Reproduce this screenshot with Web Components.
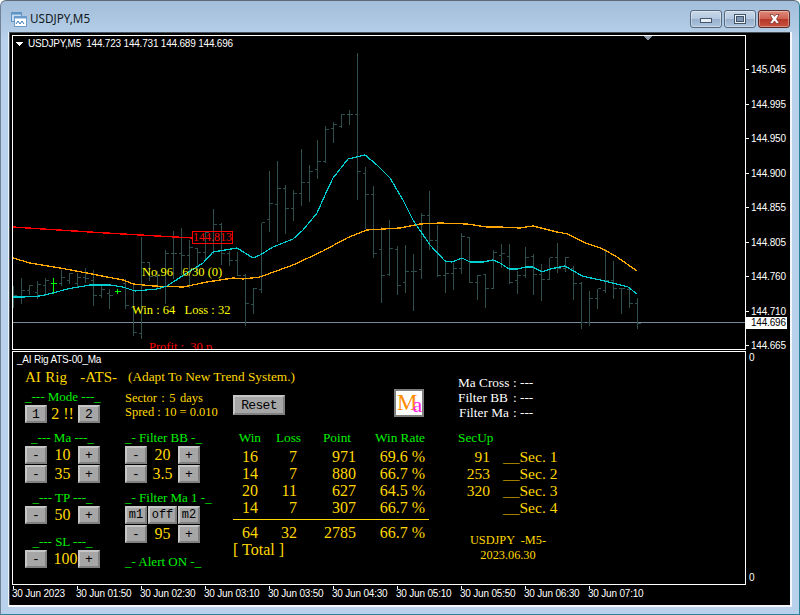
<!doctype html>
<html>
<head>
<meta charset="utf-8">
<title>USDJPY,M5</title>
<style>
html, body { margin: 0; background: #fff; }
</style>
</head>
<body>
<x-window>
  <x-titlebar slot="title">USDJPY,M5</x-titlebar>
  <x-chart></x-chart>
  <x-price-axis></x-price-axis>
  <x-panel>
    <x-title-row slot="head"></x-title-row>
    <div slot="c1">
      <x-field label="_--- Mode ---_"><x-stepper a="1" b="2">2 !!</x-stepper></x-field>
      <x-field label="_--- Ma ---_" style="margin-top:7px"><x-stepper>10</x-stepper><x-stepper>35</x-stepper></x-field>
      <x-field label="_--- TP ---_" style="margin-top:7px"><x-stepper>50</x-stepper></x-field>
      <x-field label="_--- SL ---_" style="margin-top:10px"><x-stepper style="--nudge:6px">100</x-stepper></x-field>
    </div>
    <div slot="c2">
      <x-sector></x-sector>
      <x-field label="_- Filter BB -_" style="margin-top:2px"><x-stepper>20</x-stepper><x-stepper>3.5</x-stepper></x-field>
      <x-field label="_- Filter Ma 1 -_" style="margin-top:7px"><x-ma-switch></x-ma-switch><x-stepper>95</x-stepper></x-field>
      <x-field label="_- Alert ON -_" style="margin-top:11px"></x-field>
    </div>
    <x-results slot="c3"></x-results>
    <x-status slot="c4"></x-status>
  </x-panel>
  <x-sub-axis></x-sub-axis>
  <x-time-axis></x-time-axis>
</x-window>

<script>
/* globals customElements HTMLElement */
const define = (name, style, html, extra) => {
  const template = document.createElement('template')
  template.innerHTML = `<style>${style}</style>${html}`
  customElements.define(name, class extends HTMLElement {
    constructor () {
      super()
      this.attachShadow({mode: 'open'})
      this.shadowRoot.appendChild(template.content.cloneNode(true))
    }
    connectedCallback () {
      if (extra) extra.call(this, this.shadowRoot)
    }
  })
}

const serif = '"Liberation Serif", "Times New Roman", serif'
const sans = '"Liberation Sans", Arial, sans-serif'
const mono = '"Liberation Mono", "Courier New", monospace'

// Window frame. Chart, axis, panel and time strip sit on a small grid inside the client area.
define('x-window', `
  :host {
    display: flex; flex-direction: column; box-sizing: border-box;
    width: 800px; height: 615px; overflow: hidden;
    border: 1px solid #2a8296; border-top-color: #5e6a75; border-left-color: #6f8296;
    border-radius: 6px 6px 0 0;
    background: linear-gradient(#a3bedb, #b9d1ea 40px);
  }
  #client {
    flex: 1; margin: 0 7px 7px 7px;
    border-left: 1px solid #eef3f9; border-right: 2px solid #f4f7fb; border-bottom: 2px solid #f4f7fb;
    background: #000; box-shadow: inset 1px 1px 0 #454f59;
    display: grid; box-sizing: border-box;
    padding: 3px 0 0 3px;
    grid-template-columns: 734px 1fr;
    grid-template-rows: 315px 234px 1fr;
    row-gap: 1px;
  }
  ::slotted(x-time-axis) { grid-column: 1 / 3; }
`, `<slot name="title"></slot><div id="client"><slot></slot></div>`)

define('x-titlebar', `
  :host {
    display: flex; align-items: flex-start; height: 31px; box-sizing: border-box;
    padding: 9px 9px 0 10px;
    font: 11.700px "Noto Sans", "Open Sans", sans-serif; color: #101820;
  }
  svg { margin: 2px 3px 0 0; flex: none; }
  #t { flex: 1; }
  .b {
    width: 32px; height: 18px; box-sizing: border-box; margin-left: 2px;
    border: 1px solid #56697f; border-radius: 3px;
    background: linear-gradient(#cad9ea 0, #b4c8df 48%, #98b0cc 52%, #aec5de 100%);
    box-shadow: inset 0 0 0 1px rgba(255,255,255,.35);
    display: flex; align-items: center; justify-content: center;
  }
  .c {
    border-color: #5c2a25;
    background: linear-gradient(#de8a7c 0, #cf6252 48%, #b5392a 52%, #c9503e 100%);
  }
  .min { width: 12px; height: 5px; margin-top: 3px; box-sizing: border-box; background: #e8eef5; border: 1px solid #46566a; }
  .max { width: 12px; height: 10px; box-sizing: border-box; background: #7d95b0; border: 1px solid #46566a; box-shadow: inset 0 0 0 1px #eef3f8, inset 0 0 0 2px #46566a; }
`, `
  <svg width="16" height="15" viewBox="0 0 16 15">
    <rect x="0.5" y="0.5" width="10" height="9" fill="#c4dcf2" stroke="#5f93c4"/>
    <rect x="0.5" y="0.5" width="10" height="2" fill="#5f93c4"/>
    <rect x="3.5" y="4.5" width="12" height="10" fill="#fff" stroke="#6c9ccb"/>
    <rect x="3.5" y="4.5" width="12" height="2" fill="#6c9ccb"/>
    <path d="M5 12l2-3 2 3 2-3 2 3" fill="none" stroke="#3d79b4"/>
  </svg>
  <div id="t"><slot></slot></div>
  <div class="b"><div class="min"></div></div>
  <div class="b"><div class="max"></div></div>
  <div class="b c">
    <svg style="margin:0" width="13" height="10" viewBox="0 0 13 10"><path d="M2 .5h3l1.500 2 1.500-2h3L8.500 5l3 4.500h-3L6.500 7l-2 2.500h-3L4.500 5z" fill="#fff" stroke="#7b2c22" stroke-width=".7"/></svg>
  </div>
`)

// OHLC bars read off the reference: high, low, open, close as 3x crop rows, one list per crop
const crop = (list, top) => list.map(b => b.map(v => top + v / 3))
const bars = [
  ...crop([
    [255, 320, 295, 285], [232, 308, 292, 270], [253, 283, 270, 255], [240, 295, 275, 252],
    [232, 285, 255, 240], [232, 280, 250, 250], [207, 255, 250, 230], [217, 250, 240, 220],
    [215, 262, 248, 230], [202, 245, 230, 235], [208, 315, 240, 285], [255, 290, 285, 268],
    [263, 325, 278, 285], [265, 279, 272, 272], [235, 325, 250, 315], [252, 405, 320, 395],
    [108, 415, 400, 185], [185, 240, 185, 228], [210, 262, 228, 258], [148, 308, 258, 160],
    [90, 235, 160, 160], [82, 222, 160, 165], [118, 260, 165, 140], [145, 215, 145, 155],
    [90, 180, 155, 95], [25, 160, 155, 72], [65, 192, 72, 158], [150, 195, 160, 180],
    [152, 225, 180, 225], [218, 375, 225, 310], [262, 340, 312, 265]
  ], 200),
  ...crop([
    [545, 755, 748, 547], [390, 572, 538, 490], [360, 602, 493, 445], [432, 578, 445, 505],
    [447, 540, 505, 460], [323, 495, 458, 427], [372, 482, 427, 394], [297, 413, 388, 364],
    [255, 365, 364, 268], [243, 305, 265, 253], [220, 260, 258, 223], [207, 252, 223, 222],
    [37, 476, 223, 394], [378, 565, 400, 463], [435, 650, 463, 640], [558, 785, 628, 706],
    [537, 705, 703, 625], [615, 762, 628, 735], [612, 755, 727, 693], [640, 810, 692, 692],
    [516, 713, 688, 525], [450, 628, 525, 601], [552, 708, 601, 704], [663, 755, 706, 700],
    [665, 747, 700, 685], [576, 698, 685, 588], [590, 727, 592, 727], [702, 776, 727, 706],
    [702, 800, 703, 745], [628, 745, 745, 637]
  ], 40),
  ...crop([
    [128, 200, 165, 158], [128, 250, 168, 245], [210, 278, 240, 225], [138, 230, 225, 170],
    [160, 282, 168, 222], [190, 300, 222, 238], [170, 238, 238, 172], [126, 215, 172, 205],
    [168, 212, 205, 170], [195, 296, 205, 248], [243, 383, 248, 365], [270, 375, 365, 295],
    [265, 323, 293, 265], [145, 275, 270, 240], [180, 293, 240, 265], [262, 338, 265, 265],
    [268, 320, 268, 310], [290, 383, 310, 368]
  ], 200)
]

const cyan = '13,297 23,297 40,296 53,293 67,289 90,285 110,285 123,287 135,291 157,289 167,286 187,273 203,263 213,252 237,248 253,258 260,255 273,247 293,239 303,230 317,213 325,195 333,178 348,159 365,155 377,165 390,178 403,200 413,220 430,245 445,261 452,262 462,258 470,262 483,262 493,260 500,263 509,269 518,269 525,267 533,267 542,272 550,269 565,266 582,276 600,280 620,285 628,287 637,294'
const orange = '13,258 30,263 60,268 87,273 107,277 123,280 133,284 153,286 183,287 207,282 233,278 243,279 260,277 293,265 323,251 347,238 367,230 400,228 420,224 440,223 467,224 487,227 500,227 520,228 533,226 557,232 568,234 583,242 603,249 617,257 637,271'
const red = '13,227 43,229 90,232 140,235 193,238'
const shift = pts => pts.split(' ').map(p => { const [x, y] = p.split(','); return `${x - 12},${y - 35}` }).join(' ')

define('x-chart', `
  :host {
    display: block; position: relative; overflow: hidden; box-sizing: border-box;
    border: 1px solid #fff; border-right-width: 1px; width: 734px; height: 315px;
    font: 10px ${sans}; color: #fff;
  }
  svg { position: absolute; left: -1px; top: -1px; }
  span { position: absolute; white-space: pre; }
  #sym { left: 15px; top: 2px; letter-spacing: -.2px; }
  #no, #wl { font: 12.500px ${serif}; color: #ff0; }
  #no { left: 129px; top: 229px; }
  #wl { left: 119px; top: 267px; }
  #pf { font: 12.500px ${serif}; color: #f00; left: 136px; top: 304px; }
  #tag {
    left: 179px; top: 195px; width: 41px; height: 13px; box-sizing: border-box;
    border: 1px solid #f00; font: 12px/11px ${serif}; color: #f00; text-align: center;
  }
`, `
  <svg id="s" width="734" height="315" shape-rendering="crispEdges"></svg>
  <span id="sym">USDJPY,M5  144.723 144.731 144.689 144.696</span>
  <span id="no">No.96   6/30 (0)</span>
  <span id="wl">Win : 64   Loss : 32</span>
  <span id="pf">Profit :  30 p</span>
  <span id="tag">144.813</span>
`, function (root) {
  let d = ''
  let g = ''
  bars.forEach(([h, l, o, c], i) => {
    const x = 13 + 8 * i - 12 + 0.5
    const y = v => Math.round(v - 35) + 0.5
    const seg = `M${x} ${y(h)}V${y(l)}M${x - 3} ${y(o)}H${x}M${x} ${y(c)}H${x + 3}`
    if (i === 5 || i === 13) g += seg
    else d += seg
  })
  const line = (pts, col, w) => `<polyline points="${shift(pts)}" fill="none" stroke="${col}" stroke-width="${w}"/>`
  root.getElementById('s').innerHTML = `
    <path d="M1 287.500H734" stroke="#778899"/>
    <path d="${d}" stroke="#2f4f4f" fill="none"/>
    <path d="${g}" stroke="#00ff00" fill="none"/>
    ${line(red, '#ff0000', 1.4)}
    ${line(orange, '#ffa500', 1.3)}
    ${line(cyan, '#00ced1', 1.2)}
    <path d="M4 7h7l-3.500 4z" fill="#fff"/>
    <path d="M631 1h9l-4.500 4.500z" fill="#8c97a3"/>
  `
})

define('x-price-axis', `
  :host {
    display: block; position: relative; box-sizing: border-box; padding-top: 17.500px;
    font: 10px ${sans}; color: #fff; letter-spacing: -.2px;
  }
  div { height: 34.500px; display: flex; align-items: center; }
  div::before { content: ''; width: 3px; height: 1px; background: #fff; margin-right: 2px; }
  #now {
    position: absolute; left: 0; top: 282px; width: 41px; height: 12px; box-sizing: border-box;
    padding-left: 5px; background: #fff; color: #000; line-height: 12px;
  }
`, `
  <div>145.045</div><div>144.995</div><div>144.950</div><div>144.900</div><div>144.855</div>
  <div>144.805</div><div>144.760</div><div>144.710</div><div>144.665</div>
  <span id="now">144.696</span>
`)

// Indicator window: heading row across three columns, status column runs the full height
define('x-panel', `
  :host {
    display: block; box-sizing: border-box; border: 1px solid #fff; width: 734px; height: 234px;
    overflow: hidden; color: gold;
  }
  #name { font: 10px ${sans}; color: #fff; height: 17px; padding: 2px 0 0 4px; box-sizing: border-box; letter-spacing: -.2px; }
  #g {
    display: grid; padding-left: 12px;
    grid-template-columns: 100px 108px 225px 1fr;
    grid-template-rows: 20px 1fr;
  }
  #h { grid-column: 1 / 4; }
  #s4 { grid-column: 4; grid-row: 1 / 3; }
`, `
  <div id="name">_AI Rig ATS-00_Ma</div>
  <div id="g">
    <div id="h"><slot name="head"></slot></div>
    <div><slot name="c1"></slot></div>
    <div><slot name="c2"></slot></div>
    <div><slot name="c3"></slot></div>
    <div id="s4"><slot name="c4"></slot></div>
  </div>
`)

define('x-title-row', `
  :host { display: flex; align-items: center; height: 16px; color: gold; font-family: ${serif}; }
  div { white-space: pre; }
  #a { font-size: 15px; width: 103px; word-spacing: .7px; }
  #b { font-size: 13.300px; }
`, `<div id="a">AI Rig   -ATS-</div><div id="b">(Adapt To New Trend System.)</div>`)

define('x-sub-axis', `
  :host {
    display: flex; flex-direction: column; justify-content: space-between; box-sizing: border-box;
    padding: 1px 0 0 3px; height: 234px; font: 10px ${sans}; color: #fff;
  }
  div { height: 12px; }
  div:last-child { position: relative; top: -1px; }
`, `<div>0</div><div>0</div>`)

define('x-time-axis', `
  :host {
    display: flex; font: 10px ${sans}; color: #fff; letter-spacing: -.2px;
  }
  div { width: 64px; flex: none; position: relative; padding-top: 2px; white-space: nowrap; }
  div::before { content: ''; position: absolute; left: 1px; top: 0; width: 1px; height: 3px; background: #fff; }
`, '', function (root) {
  const times = ['30 Jun 2023', '30 Jun 01:50', '30 Jun 02:30', '30 Jun 03:10', '30 Jun 03:50', '30 Jun 04:30', '30 Jun 05:10', '30 Jun 05:50', '30 Jun 06:30', '30 Jun 07:10']
  root.innerHTML += times.map(t => `<div>${t}</div>`).join('')
})

define('x-btn', `
  :host {
    display: inline-flex; align-items: center; justify-content: center; flex: none; box-sizing: border-box;
    width: var(--w, 22px); height: var(--h, 18px);
    background: #a6a6a6; color: #000;
    border: 2px solid; border-color: #c6c6c6 #808080 #808080 #c6c6c6;
    font: var(--fs, 13px)/1 ${mono}; letter-spacing: var(--ls, 0);
  }
`, `<slot></slot>`)

define('x-stepper', `
  :host {
    display: flex; width: 75px; height: 18px; align-items: center; justify-content: space-between;
    margin-bottom: 1px; color: gold; font: 16px ${serif};
  }
  #v { flex: 1; text-align: center; white-space: pre; padding-left: var(--nudge, 0); }
`, `<x-btn id="m">-</x-btn><div id="v"><slot></slot></div><x-btn id="p">+</x-btn>`, function (root) {
  if (this.hasAttribute('a')) root.getElementById('m').textContent = this.getAttribute('a')
  if (this.hasAttribute('b')) root.getElementById('p').textContent = this.getAttribute('b')
})

define('x-ma-switch', `
  :host { display: flex; gap: 1px; margin-bottom: 1px; --fs: 12px; }
`, `<x-btn>m1</x-btn><x-btn style="--w:29px">off</x-btn><x-btn>m2</x-btn>`)

define('x-field', `
  :host { display: block; width: 75px; }
  #l { height: 16px; font: 13px/15px ${serif}; color: #00f000; text-align: center; white-space: pre; }
`, `<div id="l"></div><slot></slot>`, function (root) {
  root.getElementById('l').textContent = this.getAttribute('label')
})

define('x-sector', `
  :host { display: block; padding-top: 3px; font: 12.500px/13.500px ${serif}; color: gold; height: 39px; box-sizing: border-box; }
  div { white-space: pre; }
`, `<div style="word-spacing:1.300px">Sector : 5 days</div><div>Spred : 10 = 0.010</div>`)

define('x-results', `
  :host { display: block; color: gold; font: 16px/17px ${serif}; }
  #top { display: flex; justify-content: space-between; align-items: flex-start; width: 191px; height: 41px; }
  #ico {
    width: 30px; height: 28px; box-sizing: border-box; border: 2px solid #7f7f7f; background: #fff;
    display: flex; align-items: flex-start; padding-left: 1px;
  }
  #ico b { font: 23px/24px ${serif}; color: #ff8c00; }
  #ico i { font: 22px/22px ${serif}; color: #ff1fe0; margin: 3px 0 0 -5px; }
  #rs { margin-top: 6px; --w: 52px; --h: 20px; --ls: -.7px; }
  table { border-collapse: collapse; width: 196px; table-layout: fixed; }
  td, th { padding: 0; text-align: right; font-weight: normal; white-space: pre; }
  th { font: 13.300px/16px ${serif}; color: #00f000; padding-bottom: 2px; }
  td { height: 17px; }
  .line td { height: 8px; line-height: 0; }
  .line div { border-top: 1px solid gold; margin-top: -1px; }
  #tot { font-size: 16px; line-height: 18px; }
`, `
  <div id="top">
    <x-btn id="rs">Reset</x-btn>
    <div id="ico"><b>M</b><i>a</i></div>
  </div>
  <table>
    <colgroup><col style="width:25px"><col style="width:39px"><col style="width:59px"><col style="width:69px"><col></colgroup>
    <tr><th><span style="position:relative;left:3px">Win</span></th><th><span style="position:relative;left:4px">Loss</span></th><th><span style="position:relative;left:-5px">Point</span></th><th>Win Rate</th></tr>
    <tr><td>16</td><td>7</td><td>971</td><td>69.6 %</td></tr>
    <tr><td>14</td><td>7</td><td>880</td><td>66.7 %</td></tr>
    <tr><td>20</td><td>11</td><td>627</td><td>64.5 %</td></tr>
    <tr><td>14</td><td>7</td><td>307</td><td>66.7 %</td></tr>
    <tr class="line"><td colspan="5"><div></div></td></tr>
    <tr><td>64</td><td>32</td><td>2785</td><td>66.7 %</td></tr>
  </table>
  <div id="tot">[ Total ]</div>
`)

define('x-status', `
  :host { display: block; padding-top: 6px; font: 13.300px/15px ${serif}; color: gold; }
  #st { display: grid; grid-template-columns: 55px 1fr; color: #fff; height: 45px; white-space: pre; }
  #up { height: 16px; margin-top: 10px; line-height: 16px; color: #00f000; margin-bottom: 2px; }
  #r { display: grid; grid-template-columns: 32px 1fr; grid-auto-rows: 17px; column-gap: 13px; font: 15.500px/17px ${serif}; height: 68px; white-space: pre; }
  #r div:nth-child(odd) { text-align: right; }
  #r span { font-size: 11px; line-height: 1; }
  #m { width: 100px; text-align: center; margin-top: 17px; font-size: 12.300px; white-space: pre; }
`, `
  <div id="st">
    <div>Ma Cross</div><div>: ---</div>
    <div>Filter BB</div><div>: ---</div>
    <div style="padding-left:1px">Filter Ma</div><div>: ---</div>
  </div>
  <div id="up">SecUp</div>
  <div id="r">
    <div>91</div><div><span>___</span>Sec. 1</div>
    <div>253</div><div><span>___</span>Sec. 2</div>
    <div>320</div><div><span>___</span>Sec. 3</div>
    <div></div><div><span>___</span>Sec. 4</div>
  </div>
  <div id="m">USDJPY  -M5-<br>2023.06.30</div>
`)
</script>
</body>
</html>
